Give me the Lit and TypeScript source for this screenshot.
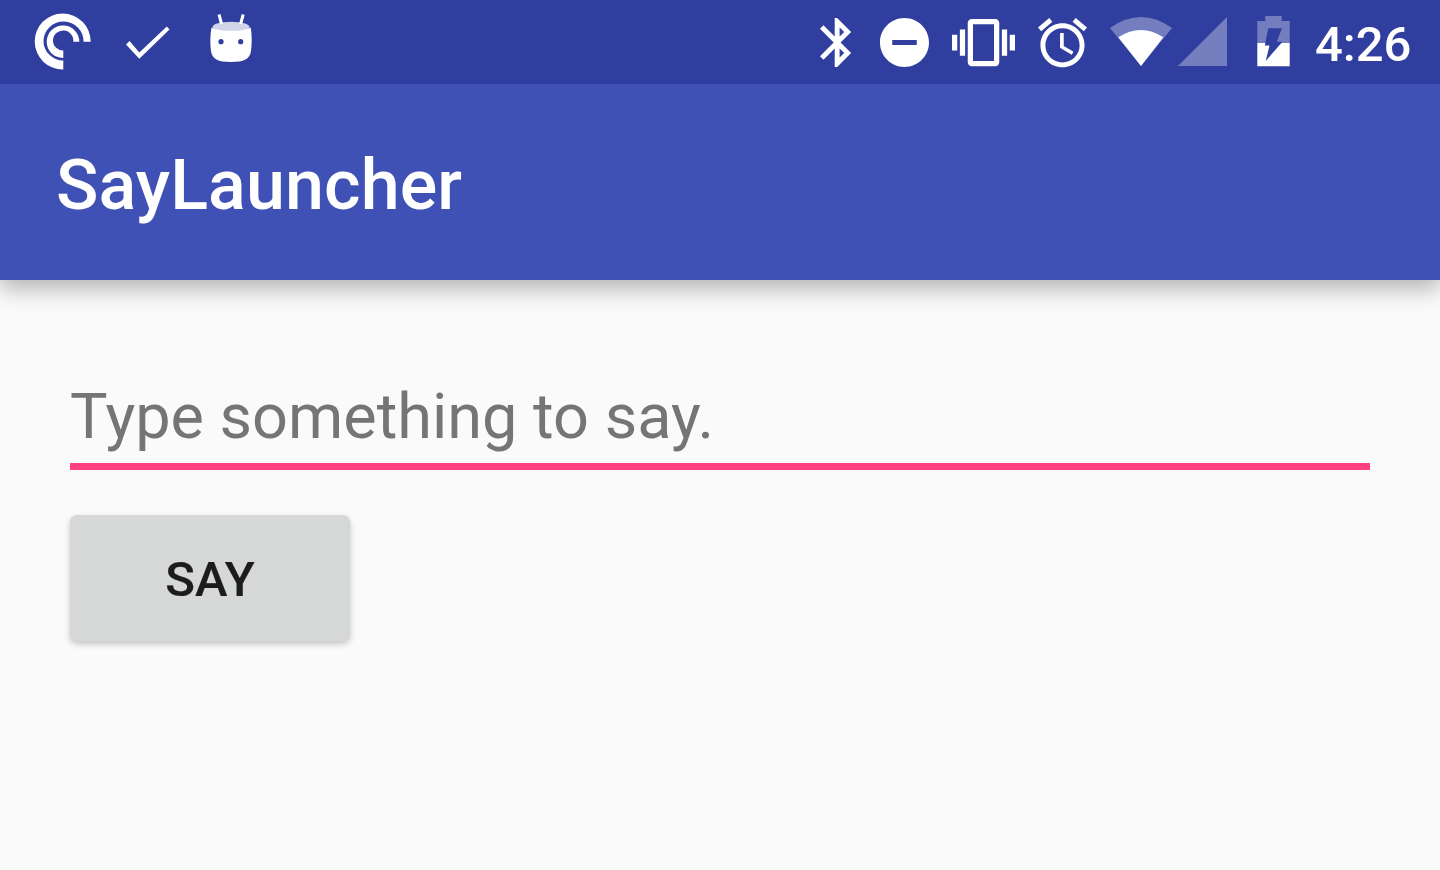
import { LitElement, html, css, svg } from "lit";
import { customElement } from "lit/decorators.js";

const box = (x: number, w: number, body: unknown) => html`<svg class="ic" width=${w} height="84" viewBox="${x} 0 ${w} 84" fill="#fff">${body}</svg>`;

@customElement("app-root")
export class AppRoot extends LitElement {
  static styles = css`
    :host { display: block; width: 1440px; height: 870px; background: #fafafa; overflow: hidden; font-family: Roboto, "Liberation Sans", sans-serif; }
    .status { height: 84px; background: #303f9f; display: flex; justify-content: space-between; position: relative; z-index: 1; }
    .group { display: flex; align-items: center; }
    .ic { display: block; flex: none; }
    .time { color: #fff; font-size: 49px; font-weight: 500; width: 130px; padding: 6px 0 0 5px; box-sizing: border-box; line-height: 84px; }
    .bar { height: 196px; background: #3f51b5; box-shadow: 0 8px 22px rgba(0,0,0,.3); padding-left: 56px; display: flex; align-items: center; position: relative; }
    .title { color: #fff; font-size: 70px; font-weight: 500; line-height: 1; padding-top: 5px; letter-spacing: .1px; }
    .content { padding: 0 70px; }
    .field { margin-top: 100px; height: 83px; border-bottom: 7px solid #ff4081; color: #757575; font-size: 63px; line-height: 73px; }
    .btn { margin-top: 45px; width: 280px; height: 126px; background: #d6d7d7; border-radius: 7px; box-shadow: 0 3px 6px rgba(0,0,0,.22); display: flex; align-items: center; justify-content: center; padding-top: 2px; box-sizing: border-box; color: #1c1c1c; font-size: 49px; font-weight: 500; -webkit-text-stroke: .2px #1c1c1c; }
  `;
  render() {
    return html`
      <div class="status">
        <div class="group">
          ${box(0, 110, svg`
            <path d="M63.3 69.5 A 28 28 0 1 1 90.7 41.7 H 83.5 A 20 19.5 0 1 0 63.3 60.5 Z"/>
            <path d="M63.3 58 A 16.3 16.3 0 1 1 79.3 41.7 H 73.3 A 10.2 10 0 1 0 63.3 50.5 Z"/>`)}
          ${box(110, 85, svg`<path d="M126 44.5 L129.6 41 L139.3 52.4 L166.8 26.4 L169.5 29.6 L139.3 58.8 Z"/>`)}
          ${box(195, 70, svg`
            <path d="M219 14.5 L221.6 24 M243.2 14.5 L240.6 24" stroke="#fff" stroke-width="3" fill="none"/>
            <ellipse cx="231" cy="27" rx="18.5" ry="5.2" opacity=".78"/>
            <path d="M211.5 27.5 C218 32 244 32 250.8 27.5 C252 36 252 44 251 51 C250 59 244 62 231 62 C218 62 212 59 211 51 C210 44 210 36 211.5 27.5 Z"/>
            <circle cx="221" cy="41.7" r="2.6" fill="#303f9f"/><circle cx="240.7" cy="41.7" r="2.6" fill="#303f9f"/>`)}
        </div>
        <div class="group">
          ${box(810, 57, svg`<path transform="translate(807.75 13.1) scale(2.45)" d="M17.71 7.71L12 2h-1v7.59L6.41 5 5 6.41 10.59 12 5 17.59 6.41 19 11 14.41V22h1l5.71-5.71-4.3-4.29 4.3-4.29zM13 5.83l1.88 1.88L13 9.59V5.83zm1.88 10.46L13 18.17v-3.76l1.88 1.88z"/>`)}
          ${box(867, 74, svg`<path transform="translate(875.1 13.1) scale(2.45)" d="M12 2C6.48 2 2 6.48 2 12s4.48 10 10 10 10-4.48 10-10S17.52 2 12 2zm5 11H7v-2h10v2z"/>`)}
          ${box(941, 85, svg`<path transform="translate(952 11.1) scale(2.625)" d="M0 15h2V9H0v6zm3 2h2V7H3v10zm19-8v6h2V9h-2zm-3 8h2V7h-2v10zM16.5 3h-9C6.67 3 6 3.67 6 4.5v15c0 .83.67 1.5 1.5 1.5h9c.83 0 1.5-.67 1.5-1.5v-15c0-.83-.67-1.5-1.5-1.5zM16 19H8V5h8v14z"/>`)}
          ${box(1026, 73, svg`<path transform="translate(1033.1 13.45) scale(2.45)" d="M22 5.72l-4.6-3.86-1.29 1.53 4.6 3.86L22 5.72zM7.88 3.39L6.6 1.86 2 5.71l1.29 1.53 4.59-3.85zM12.5 8H11v6l4.75 2.85.75-1.23-4-2.37V8zM12 4c-4.97 0-9 4.03-9 9s4.03 9 9 9 9-4.03 9-9-4.03-9-9-9zm0 16c-3.87 0-7-3.13-7-7s3.13-7 7-7 7 3.13 7 7-3.13 7-7 7z"/>`)}
          ${box(1099, 76, svg`
            <path d="M1141 66 L1110 28 Q1141 6 1172 28 Z" opacity=".33"/>
            <path d="M1141 66 L1118.3 37.3 Q1141 22.7 1163.3 37.3 Z"/>`)}
          ${box(1175, 65, svg`<path d="M1178 66 H1227 V17 Z" opacity=".33"/>`)}
          ${box(1240, 70, svg`
            <path d="M1265.3 16 H1281.7 V21 H1289.7 V43 H1257.3 V21 H1265.3 Z" opacity=".33"/>
            <path d="M1257.3 43 H1289.7 V66.3 H1257.3 Z"/>
            <path d="M1268.3 28.3 H1282 L1276.7 41.7 H1282.5 L1265.7 61 L1269.5 45.5 H1264.8 Z" fill="#303f9f"/>`)}
          <div class="time">4:26</div>
        </div>
      </div>
      <div class="bar"><div class="title">SayLauncher</div></div>
      <div class="content">
        <div class="field">Type something to say.</div>
        <div class="btn">SAY</div>
      </div>
    `;
  }
}
